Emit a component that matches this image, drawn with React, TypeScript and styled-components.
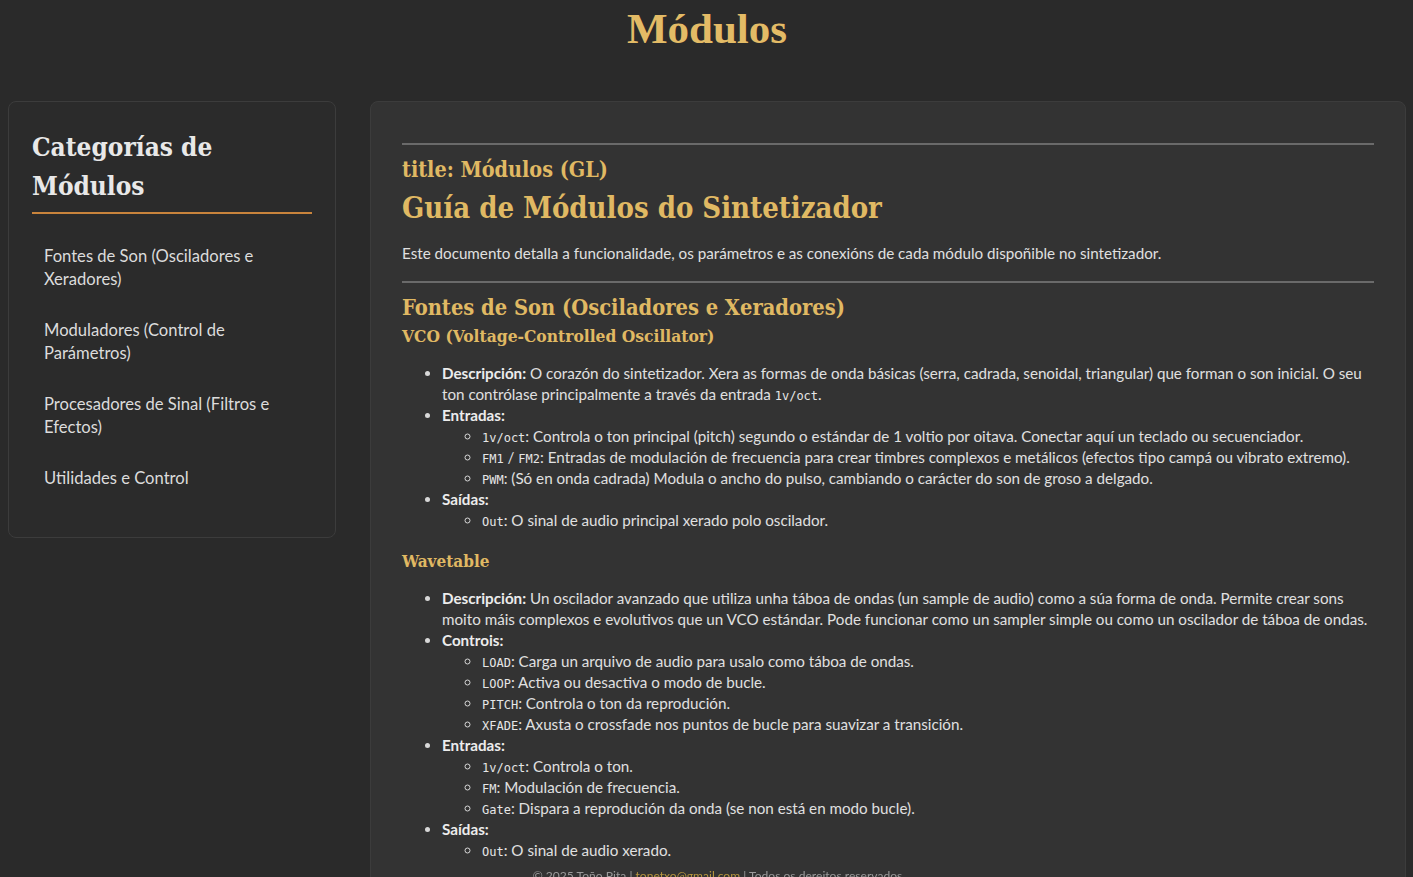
import React from "react";
import styled, { createGlobalStyle } from "styled-components";

const Global = createGlobalStyle`
  html, body { margin: 0; padding: 0; background: #2a2a2a; }
  body { font-family: "Lato", "Noto Sans", sans-serif; color: #e0e0e0; overflow: hidden; }
`;

const Page = styled.div`
  display: flex;
  flex-direction: column;
  padding: 0 7px 0 8px;
`;

const Header = styled.header`
  height: 101px;
  display: flex;
  justify-content: center;
`;

const SiteTitle = styled.h1`
  margin: 4px 0 0;
  font-family: "Liberation Serif", serif;
  font-weight: 700;
  font-size: 43px;
  line-height: 50px;
  color: #e3bb66;
`;

const Columns = styled.div`
  display: flex;
  gap: 34px;
  align-items: flex-start;
`;

const Sidebar = styled.aside`
  width: 328px;
  flex: none;
  box-sizing: border-box;
  border: 1px solid #3c3c3c;
  border-radius: 8px;
  background: #2b2b2b;
  padding: 24px 23px 47px 23px;
`;

const SideTitle = styled.h2`
  margin: 0;
  font-family: "DejaVu Serif", serif;
  font-stretch: condensed;
  font-weight: 700;
  font-size: 26px;
  line-height: 39px;
  color: #e8e8e8;
  padding: 2px 0 6px;
  border-bottom: 2px solid #c9843c;
`;

const NavList = styled.ul`
  list-style: none;
  margin: 31px 0 0;
  padding: 0;
  display: flex;
  flex-direction: column;
  gap: 28px;
`;

const NavItem = styled.li`
  padding: 0 12px;
  font-size: 16.6px;
  line-height: 23px;
  color: #dcdcdc;
`;

const Main = styled.main`
  flex: 1;
  box-sizing: border-box;
  background: #333333;
  border: 1px solid #3c3c3c;
  border-radius: 8px;
  padding: 41px 31px 40px;
  min-height: 800px;
`;

const Rule = styled.hr`
  border: none;
  border-top: 2px solid #6a6a6a;
  margin: 0;
`;

const Heading = styled.h2<{ $size: number; $lh: number; $mt: number; $mb: number }>`
  font-family: "DejaVu Serif", serif;
  font-stretch: condensed;
  font-weight: 700;
  color: #e0b963;
  font-size: ${(p) => p.$size}px;
  line-height: ${(p) => p.$lh}px;
  margin: ${(p) => p.$mt}px 0 ${(p) => p.$mb}px;
`;

const Para = styled.p`
  margin: 12px 0 17px;
  font-size: 15.2px;
  line-height: 21px;
`;

const List = styled.ul<{ $nested?: boolean }>`
  margin: 0;
  padding-left: 40px;
  list-style: ${(p) => (p.$nested ? "circle" : "disc")};
  font-size: 15.2px;
  line-height: 21px;
  li::marker { color: #d8d8d8; }
`;

const Item = styled.li``;

const Strong = styled.strong`
  font-weight: 700;
  color: #ececec;
`;

const Code = styled.code`
  font-family: "DejaVu Sans Mono", monospace;
  font-size: 12px;
  line-height: 0;
  color: #e6e6e6;
`;

const Footer = styled.footer`
  position: fixed;
  left: 0;
  right: 0;
  bottom: -8px;
  padding-left: 22px;
  text-align: center;
  font-size: 12.1px;
  line-height: 18px;
  color: #9a9a9a;
`;

const MailLink = styled.a`
  color: #b8963e;
  text-decoration: none;
`;

const Block = styled.section`
  display: flex;
  flex-direction: column;
`;

type Entry = { code: string; text: string };
type Group = { label: string; entries?: Entry[]; text?: React.ReactNode };

const vco: Group[] = [
  {
    label: "Descripción:",
    text: (
      <>
        {" "}O corazón do sintetizador. Xera as formas de onda básicas (serra, cadrada, senoidal, triangular) que forman o son inicial. O seu ton contrólase principalmente a través da entrada <Code>1v/oct</Code>.
      </>
    ),
  },
  {
    label: "Entradas:",
    entries: [
      { code: "1v/oct", text: ": Controla o ton principal (pitch) segundo o estándar de 1 voltio por oitava. Conectar aquí un teclado ou secuenciador." },
      { code: "FM1 / FM2", text: ": Entradas de modulación de frecuencia para crear timbres complexos e metálicos (efectos tipo campá ou vibrato extremo)." },
      { code: "PWM", text: ": (Só en onda cadrada) Modula o ancho do pulso, cambiando o carácter do son de groso a delgado." },
    ],
  },
  {
    label: "Saídas:",
    entries: [{ code: "Out", text: ": O sinal de audio principal xerado polo oscilador." }],
  },
];

const wavetable: Group[] = [
  {
    label: "Descripción:",
    text: (
      <>
        {" "}Un oscilador avanzado que utiliza unha táboa de ondas (un sample de audio) como a súa forma de onda. Permite crear sons moito máis complexos e evolutivos que un VCO estándar. Pode funcionar como un sampler simple ou como un oscilador de táboa de ondas.
      </>
    ),
  },
  {
    label: "Controis:",
    entries: [
      { code: "LOAD", text: ": Carga un arquivo de audio para usalo como táboa de ondas." },
      { code: "LOOP", text: ": Activa ou desactiva o modo de bucle." },
      { code: "PITCH", text: ": Controla o ton da reprodución." },
      { code: "XFADE", text: ": Axusta o crossfade nos puntos de bucle para suavizar a transición." },
    ],
  },
  {
    label: "Entradas:",
    entries: [
      { code: "1v/oct", text: ": Controla o ton." },
      { code: "FM", text: ": Modulación de frecuencia." },
      { code: "Gate", text: ": Dispara a reprodución da onda (se non está en modo bucle)." },
    ],
  },
  {
    label: "Saídas:",
    entries: [{ code: "Out", text: ": O sinal de audio xerado." }],
  },
];

const renderCode = (code: string) => {
  if (code.includes(" / ")) {
    const [a, b] = code.split(" / ");
    return (
      <>
        <Code>{a}</Code> / <Code>{b}</Code>
      </>
    );
  }
  return <Code>{code}</Code>;
};

const GroupList = ({ groups }: { groups: Group[] }) => (
  <List>
    {groups.map((g) => (
      <Item key={g.label}>
        <Strong>{g.label}</Strong>
        {g.text}
        {g.entries && (
          <List $nested>
            {g.entries.map((e) => (
              <Item key={e.code}>
                {renderCode(e.code)}
                {e.text}
              </Item>
            ))}
          </List>
        )}
      </Item>
    ))}
  </List>
);

const navItems = [
  "Fontes de Son (Osciladores e Xeradores)",
  "Moduladores (Control de Parámetros)",
  "Procesadores de Sinal (Filtros e Efectos)",
  "Utilidades e Control",
];

export default function App() {
  return (
    <>
      <Global />
      <Page>
        <Header>
          <SiteTitle>Módulos</SiteTitle>
        </Header>
        <Columns>
          <Sidebar>
            <SideTitle>Categorías de Módulos</SideTitle>
            <NavList>
              {navItems.map((n) => (
                <NavItem key={n}>{n}</NavItem>
              ))}
            </NavList>
          </Sidebar>
          <Main>
            <Rule />
            <Heading $size={21.4} $lh={30} $mt={10} $mb={0}>title: Módulos (GL)</Heading>
            <Heading as="h1" $size={29} $lh={46} $mt={0} $mb={0}>Guía de Módulos do Sintetizador</Heading>
            <Para>Este documento detalla a funcionalidade, os parámetros e as conexións de cada módulo dispoñible no sintetizador.</Para>
            <Rule />
            <Block>
              <Heading $size={21.7} $lh={30} $mt={10} $mb={0}>Fontes de Son (Osciladores e Xeradores)</Heading>
              <Heading as="h3" $size={17.3} $lh={26} $mt={0} $mb={14}>VCO (Voltage-Controlled Oscillator)</Heading>
              <GroupList groups={vco} />
              <Heading as="h3" $size={17} $lh={26} $mt={17} $mb={14}>Wavetable</Heading>
              <GroupList groups={wavetable} />
            </Block>
          </Main>
        </Columns>
        <Footer>
          © 2025 Toño Pita | <MailLink href="#">tonetxo@gmail.com</MailLink> | Todos os dereitos reservados
        </Footer>
      </Page>
    </>
  );
}
